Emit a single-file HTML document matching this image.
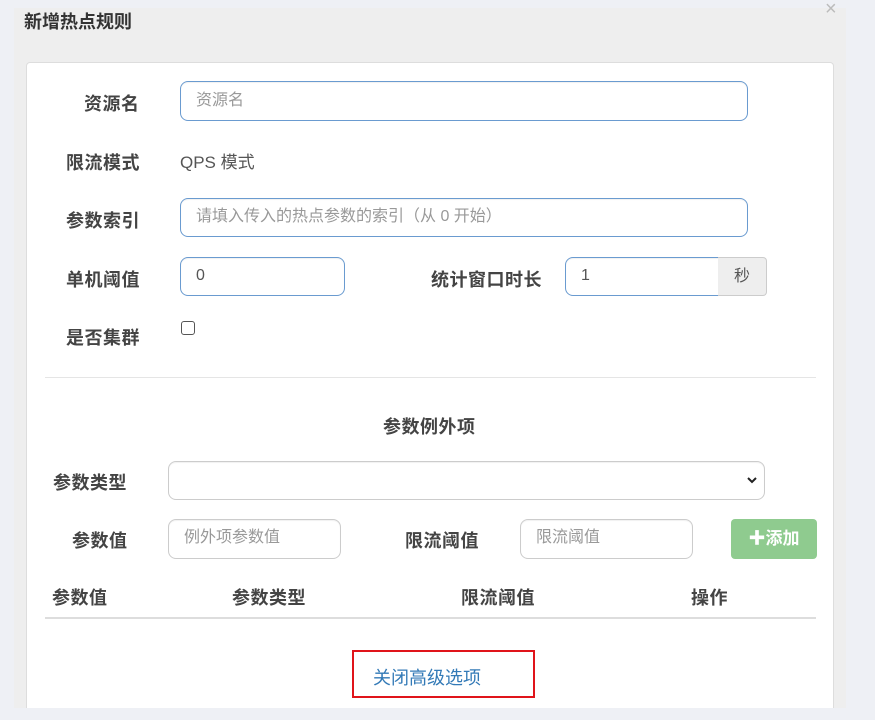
<!DOCTYPE html>
<html><head><meta charset="utf-8"><style>
*{box-sizing:border-box;margin:0;padding:0}
body{width:875px;height:720px;background:#eef0f5;position:relative;overflow:hidden;font-family:"Liberation Sans","Noto Sans CJK SC",sans-serif;color:#333}
.a{position:absolute;white-space:nowrap}
.modal{position:absolute;left:14px;top:8px;width:832px;height:700px;background:#eeeeee}
.card{position:absolute;left:26px;top:62px;width:808px;height:646px;background:#fff;border:1px solid #ddd;border-bottom:none;border-radius:4px 4px 0 0}
.lbl{position:absolute;font-size:18px;font-weight:bold;color:#444;line-height:22px;letter-spacing:0.5px}
.in{position:absolute;border:1px solid #6a9bd0;border-radius:8px;background:#fff;font-size:16px;line-height:20px;padding:9px 15px;color:#555;box-shadow:inset 0 1px 1px rgba(0,0,0,.06)}
.in.g{border-color:#ccc}
.ph{color:#999}
</style></head><body>
<div class="modal"></div>
<div class="a" style="left:24px;top:11px;font-size:18px;font-weight:bold;color:#333;line-height:22px">新增热点规则</div>
<div class="a" style="left:825px;top:-2px;font-size:20px;color:#bbb">×</div>
<div class="card"></div>

<div class="lbl" style="left:84px;top:93px">资源名</div>
<div class="in" style="left:180px;top:81px;width:568px;height:40px"><span class="ph">资源名</span></div>

<div class="lbl" style="left:66px;top:152px">限流模式</div>
<div class="a" style="left:180px;top:152px;font-size:17px;color:#555;line-height:22px">QPS 模式</div>

<div class="lbl" style="left:66px;top:210px">参数索引</div>
<div class="in" style="left:180px;top:198px;width:568px;height:39px;padding-top:8px"><span class="ph">请填入传入的热点参数的索引（从 0 开始）</span></div>

<div class="lbl" style="left:66px;top:269px">单机阈值</div>
<div class="in" style="left:180px;top:257px;width:165px;height:39px;padding-top:8px">0</div>
<div class="lbl" style="left:431px;top:269px">统计窗口时长</div>
<div class="in" style="left:565px;top:257px;width:155px;height:39px;padding-top:8px;border-radius:8px 0 0 8px">1</div>
<div class="a" style="left:718px;top:257px;width:49px;height:39px;background:#eee;border:1px solid #ccc;border-left:none;border-radius:0 4px 4px 0;text-align:center;line-height:37px;font-size:16px;color:#555">秒</div>

<div class="lbl" style="left:66px;top:327px">是否集群</div>
<div class="a" style="left:181px;top:321px;width:14px;height:14px;border:1px solid #555;border-radius:3px;background:#fff"></div>

<div class="a" style="left:45px;top:377px;width:771px;height:1px;background:#e5e5e5"></div>

<div class="lbl" style="left:383px;top:416px">参数例外项</div>

<div class="lbl" style="left:53px;top:472px">参数类型</div>
<div class="in g" style="left:168px;top:461px;width:597px;height:39px"></div>
<svg class="a" style="left:746px;top:475px" width="12" height="10" viewBox="0 0 12 10"><path d="M2 3 L6 7 L10 3" fill="none" stroke="#222" stroke-width="2"/></svg>

<div class="lbl" style="left:72px;top:530px">参数值</div>
<div class="in g" style="left:168px;top:519px;width:173px;height:40px;padding-top:8px"><span class="ph">例外项参数值</span></div>
<div class="lbl" style="left:405px;top:530px">限流阈值</div>
<div class="in g" style="left:520px;top:519px;width:173px;height:40px;padding-top:8px"><span class="ph">限流阈值</span></div>
<div class="a" style="left:731px;top:519px;width:86px;height:40px;background:#8fcb8f;border-radius:4px;color:#fff;font-size:17px;font-weight:bold;line-height:40px;text-align:center">✚添加</div>

<div class="lbl" style="left:52px;top:587px">参数值</div>
<div class="lbl" style="left:232px;top:587px">参数类型</div>
<div class="lbl" style="left:461px;top:587px">限流阈值</div>
<div class="lbl" style="left:691px;top:587px">操作</div>
<div class="a" style="left:45px;top:617px;width:771px;height:2px;background:#ddd"></div>

<div class="a" style="left:352px;top:650px;width:183px;height:48px;border:2px solid #e0141a"></div>
<div class="a" style="left:373px;top:667px;font-size:18px;color:#337ab7;line-height:22px">关闭高级选项</div>
</body></html>
